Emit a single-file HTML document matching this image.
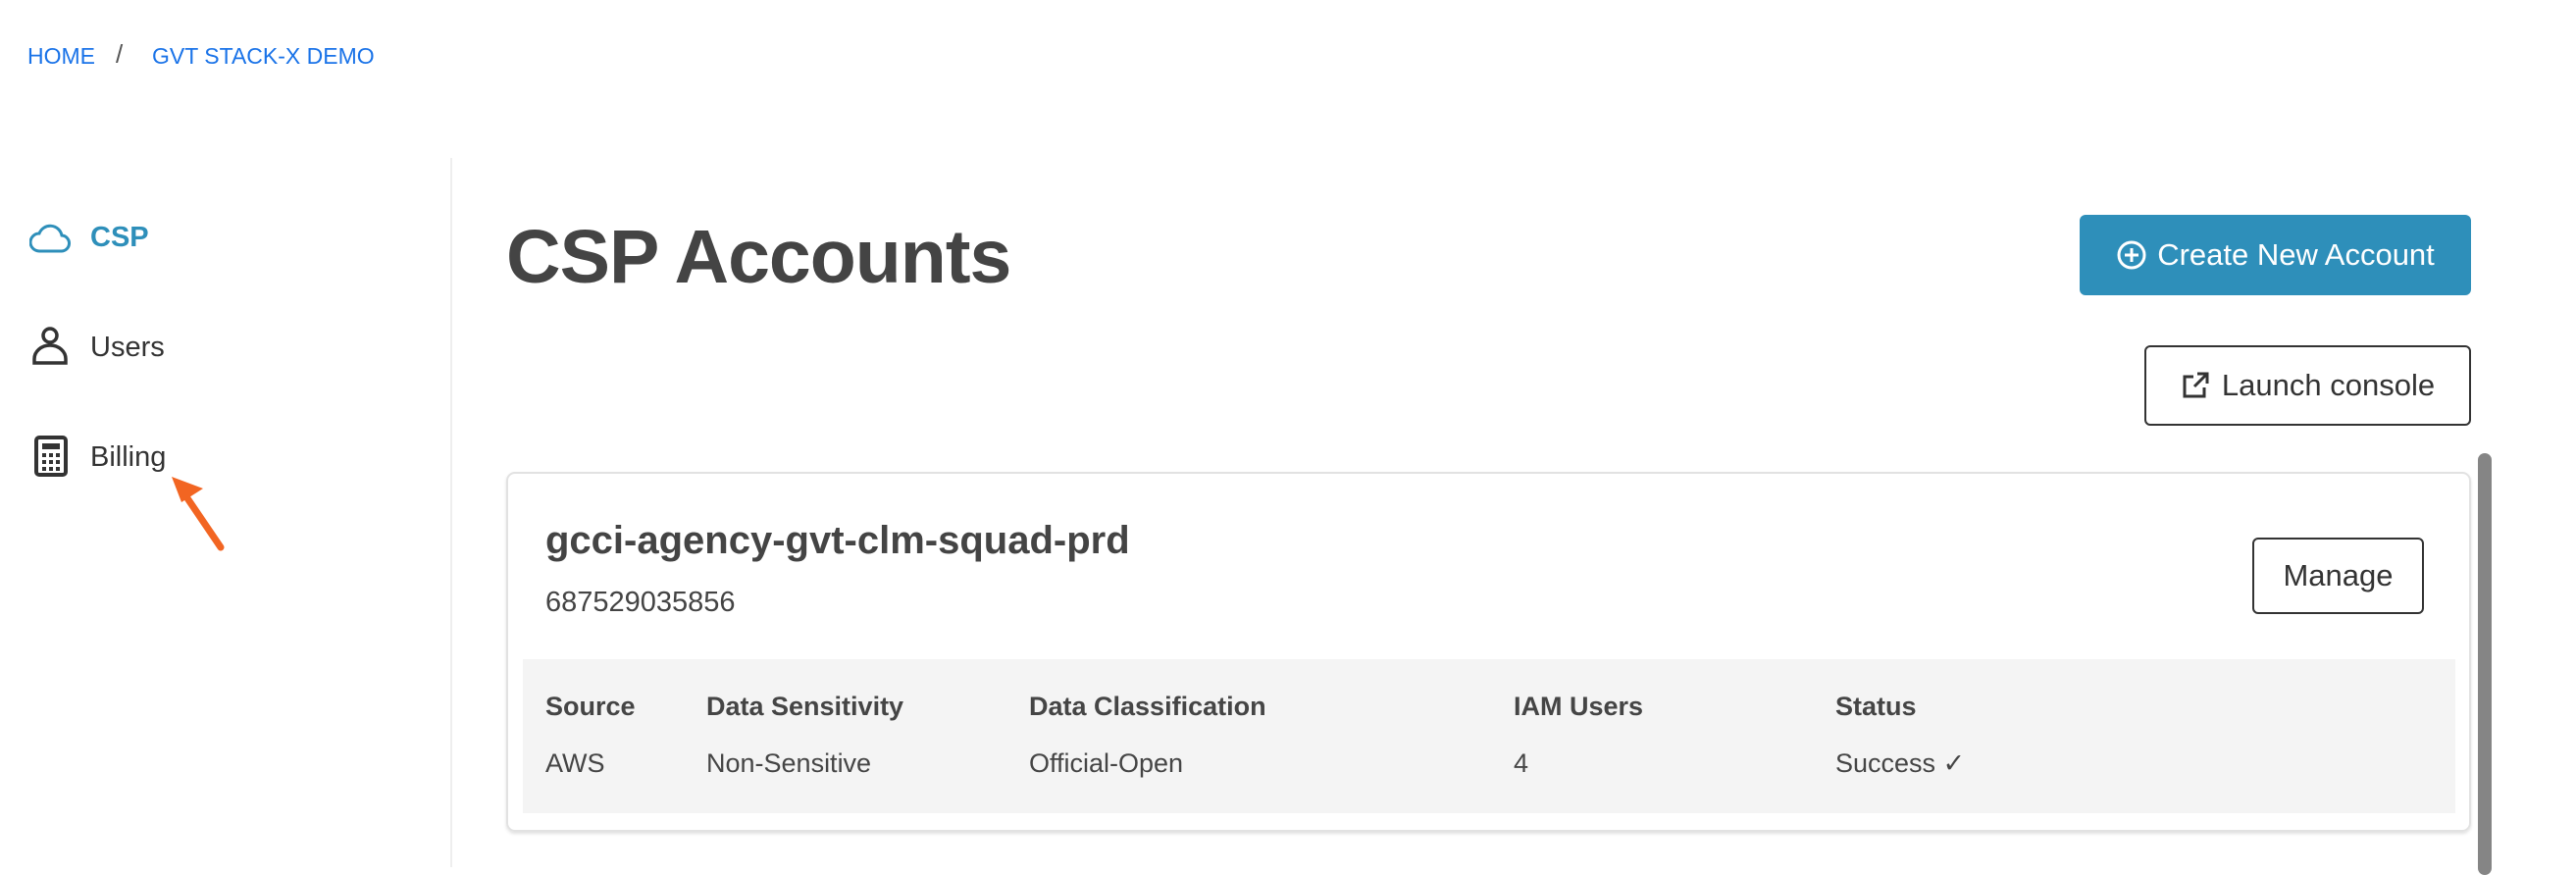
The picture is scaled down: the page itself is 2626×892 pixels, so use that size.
<!DOCTYPE html>
<html><head><meta charset="utf-8"><style>
*{margin:0;padding:0;box-sizing:border-box}
body{width:2626px;height:884px;overflow:hidden;background:#fff;font-family:"Liberation Sans",sans-serif;color:#333;position:relative}
.a{position:absolute;white-space:nowrap}
.bc{color:#1a73e8;font-size:23px;top:44px}
.nav{font-size:29px;color:#333}
.btn{position:absolute;border-radius:6px;display:flex;align-items:center;justify-content:center;font-size:31px}
.h{font-size:27px;font-weight:bold;color:#454545;top:705px}
.v{font-size:27px;color:#454545;top:763px}
</style></head><body>
<div class="a bc" style="left:28px">HOME</div>
<div class="a" style="left:118px;top:40px;font-size:26px;color:#555">/</div>
<div class="a bc" style="left:155px">GVT STACK-X DEMO</div>

<div class="a" style="left:459px;top:161px;width:2px;height:723px;background:#eee"></div>

<svg class="a" style="left:30px;top:224px" width="42" height="36" viewBox="0 0 42 36"><path d="M10 32 H32 A8 8 0 0 0 33 16 A12 12 0 0 0 10 14 A9 9 0 0 0 10 32Z" fill="none" stroke="#2e8fba" stroke-width="3"/></svg>
<div class="a nav" style="left:92px;top:226px;color:#2e8fba;font-weight:bold">CSP</div>

<svg class="a" style="left:32px;top:332px" width="38" height="40" viewBox="0 0 38 40"><circle cx="19" cy="10" r="7" fill="none" stroke="#333" stroke-width="3.5"/><path d="M3 38 V34 A16 14 0 0 1 35 34 V38Z" fill="none" stroke="#333" stroke-width="3.5"/></svg>
<div class="a nav" style="left:92px;top:338px">Users</div>

<svg class="a" style="left:35px;top:444px" width="34" height="42" viewBox="0 0 34 42"><rect x="2" y="2" width="30" height="38" rx="3" fill="none" stroke="#333" stroke-width="4"/><rect x="8" y="8" width="18" height="6" fill="#333"/><g fill="#333"><rect x="8" y="18" width="4" height="4"/><rect x="15" y="18" width="4" height="4"/><rect x="22" y="18" width="4" height="4"/><rect x="8" y="25" width="4" height="4"/><rect x="15" y="25" width="4" height="4"/><rect x="22" y="25" width="4" height="4"/><rect x="8" y="32" width="4" height="4"/><rect x="15" y="32" width="4" height="4"/><rect x="22" y="32" width="4" height="4"/></g></svg>
<div class="a nav" style="left:92px;top:450px">Billing</div>

<svg class="a" style="left:165px;top:480px" width="70" height="85" viewBox="0 0 70 85"><path d="M60 78 L22 22" stroke="#f26522" stroke-width="7" stroke-linecap="round"/><path d="M10 6 L42 18 L20 32Z" fill="#f26522"/></svg>

<div class="a" style="left:516px;top:218px;font-size:77px;font-weight:bold;color:#444;letter-spacing:-1px">CSP Accounts</div>

<div class="btn" style="left:2120px;top:219px;width:399px;height:82px;background:#2e8fba;color:#fff">
<svg width="32" height="32" viewBox="0 0 32 32" style="margin-right:10px"><circle cx="16" cy="16" r="13" fill="none" stroke="#fff" stroke-width="3"/><path d="M16 9V23M9 16H23" stroke="#fff" stroke-width="3"/></svg>Create New Account</div>

<div class="btn" style="left:2186px;top:352px;width:333px;height:82px;border:2px solid #333;color:#333">
<svg width="30" height="30" viewBox="0 0 30 30" style="margin-right:12px"><path d="M13 6H4V26H24V17" fill="none" stroke="#333" stroke-width="3"/><path d="M17 3H27V13M27 3L14 16" fill="none" stroke="#333" stroke-width="3"/></svg>Launch console</div>

<div class="a" style="left:2526px;top:462px;width:14px;height:430px;background:#858585;border-radius:7px"></div>

<div class="a" style="left:516px;top:481px;width:2003px;height:367px;border:2px solid #e2e2e2;border-radius:9px;box-shadow:0 2px 3px rgba(0,0,0,.12)"></div>
<div class="a" style="left:556px;top:529px;font-size:40px;font-weight:bold;color:#444">gcci-agency-gvt-clm-squad-prd</div>
<div class="a" style="left:556px;top:598px;font-size:29px;color:#444">687529035856</div>
<div class="btn" style="left:2296px;top:548px;width:175px;height:78px;border:2px solid #333;color:#333;font-size:31px">Manage</div>

<div class="a" style="left:533px;top:672px;width:1970px;height:157px;background:#f4f4f4"></div>
<div class="a h" style="left:556px">Source</div>
<div class="a h" style="left:720px">Data Sensitivity</div>
<div class="a h" style="left:1049px">Data Classification</div>
<div class="a h" style="left:1543px">IAM Users</div>
<div class="a h" style="left:1871px">Status</div>
<div class="a v" style="left:556px">AWS</div>
<div class="a v" style="left:720px">Non-Sensitive</div>
<div class="a v" style="left:1049px">Official-Open</div>
<div class="a v" style="left:1543px">4</div>
<div class="a v" style="left:1871px">Success ✓</div>
</body></html>
